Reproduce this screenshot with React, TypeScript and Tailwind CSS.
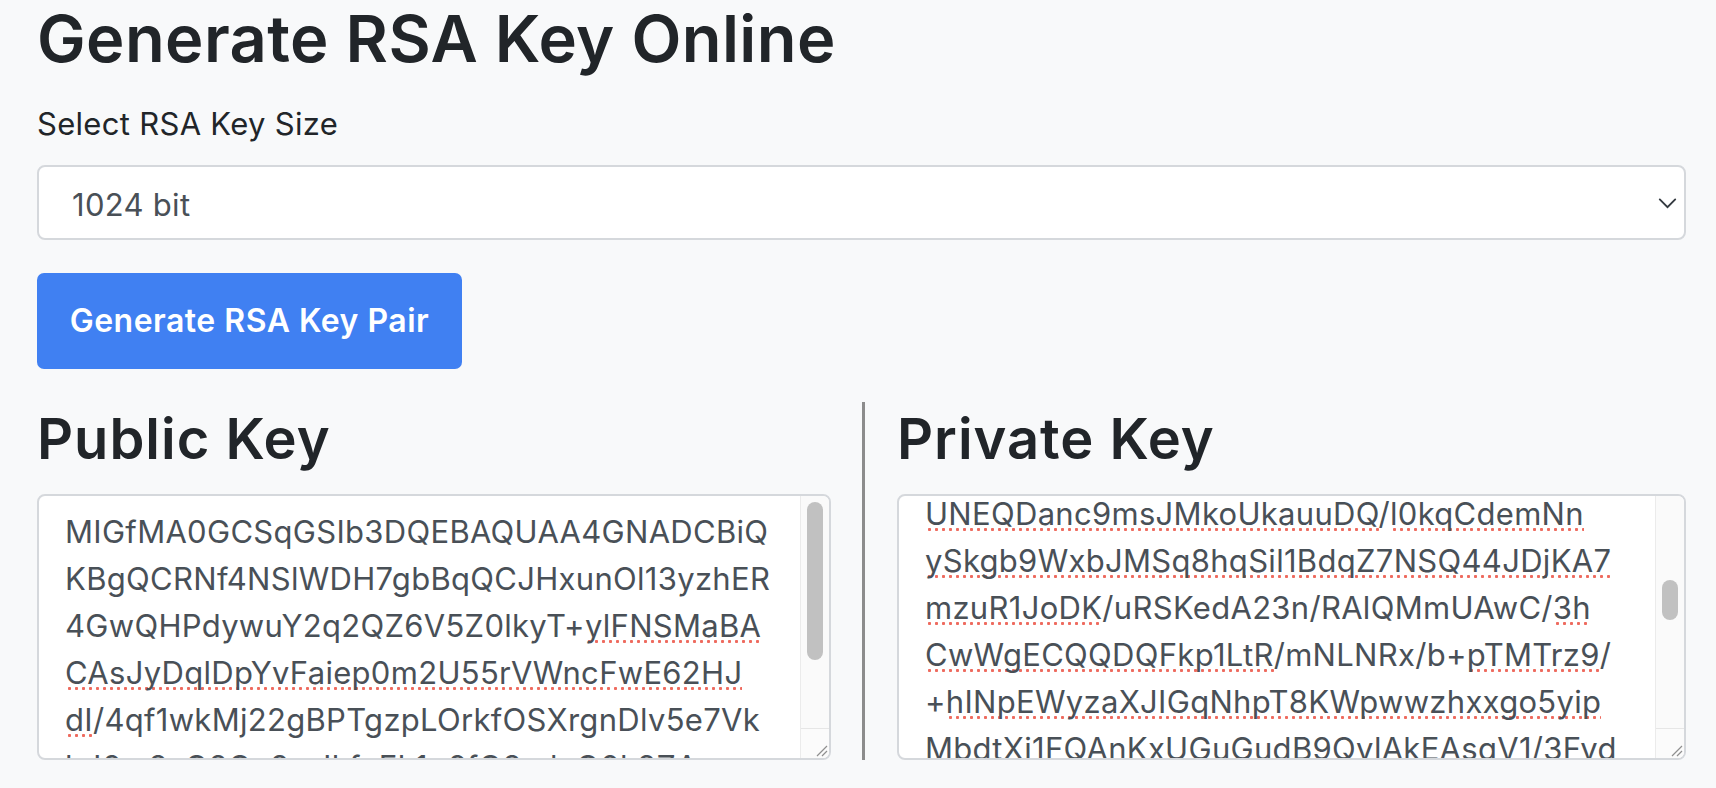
import { useEffect, useRef } from "react";

// "~" toggles the spell-check underline inside a line
const publicLines = [
  "MIGfMA0GCSqGSIb3DQEBAQUAA4GNADCBiQ",
  "KBgQCRNf4NSlWDH7gbBqQCJHxunOl13yzhER",
  "4GwQHPdywuY2q2QZ6V5Z0lkyT+~ylFNSMaBA~",
  "~CAsJyDqlDpYvFaiep0m2U55rVWncFwE62HJ~",
  "~dI~/4qf1wkMj22gBPTgzpLOrkfOSXrgnDlv5e7Vk",
  "hJ6m8sQ2Qe9wJkfvEk1p6fQ8xdeQ0k2ZAw",
  "IDAQAB",
];

const privateLines = [
  "MIICXAIBAAKBgQCRNf4NSlWDH7gbBqQCJHx",
  "unOl13yzhER4GwQHPdywuY2q2QZ6V5Z0lky",
  "T+ylFNSMaBACAsJyDqlDpYvFaiep0m2U55r",
  "VWncFwE62HJdI/4qf1wkMj22gBPTgzpLOrk",
  "fOSXrgnDlv5e7VkhJ6m8sQ2Qe9wJkfvEk1p",
  "6fQ8xdeQ0k2ZAwIDAQABAoGAQ7oVhNb3Tz",
  "jW5ZrH2x8dLkqP0sYt1vGmUcE4aR9fBnXo",
  "K3iLwS7pQzJd6hVeT2yMuA5gNcF8rOb1Xq",
  "Yk0sHtW4mEzPj9lRaG3vDiC6fUoN2wLbZx",
  "Qp7TeJ1yKcV5hSdMgR8nAo0XuBt4iFlW3",
  "sZ9qEvHk2LmPyD6rGcNaT1jOwU5xfIe8Bb",
  "~UNEQDanc9msJMkoUkauuDQ~/~l0kqCdemNn~",
  "~ySkgb9WxbJMSq8hqSil1BdqZ7NSQ44JDjKA7~",
  "~mzuR1JoDK~/uRSKedA23n/RAlQMmUAwC/~3h~",
  "~CwWgECQQDQFkp1LtR~/mNLNRx/b+~pTMTrz9~/",
  "+~hINpEWyzaXJIGqNhpT8KWpwwzhxxgo5yip~",
  "~MbdtXj1FQAnKxUGuGudB9QvlAkEAsqV1~/3Fvd",
  "aPzK4mHq8VtRy2NeLsW0dJcXg7UfB3oQi9",
  "EwT5lYr1CnGhA6vMkSuZ0bDxIp8jFqO2Ne",
  "Rg4HsLy7WdKc1QmVt9XzPa0uBoJf3EiNl6",
  "TbD2wYqG5kXnMs8rHzC1vLe4OaUj7pFgI0",
  "xKm9NcQ3sWd6yTb1ZhRv8LgE2oAfPu5JiS",
  "Vq0Hn4GtYe7kLw2MzB9cXsDr1UaOpF6jIl",
  "3dN8yQbKh5TmRx0WvEg2CsZo7LfAiJ4uPn",
  "Gk1rXe6BwSy9MtHq3VdLz0NcUa8OjF5pIb",
  "Yo2Tm7QsWx4KhEv1RzDn9LbGc6AfPu0Jig",
  "Ns5HdXe8kBqV3tMyC2wLz7OaUr1FjP9iSo",
  "Wm4QbTh0GxRv6yEk2DnZs8LcJa1fPu5Io3",
  "Bq7XeNd9KwHt2MyV4sLzR0gCa6OjF1pUiT",
  "hY3kQm8GnWxE5vb0RdTz2LsJc7AfPu9==",
];

function Line({ text }: { text: string }) {
  const parts = text.split("~");
  return (
    <div className="whitespace-pre">
      {parts.map((p, i) =>
        i % 2 === 1 ? (
          <span
            key={i}
            className="bg-[radial-gradient(circle,#ee6b5f_1.3px,transparent_1.9px)] bg-[length:7px_5px] bg-[position:1px_100%] bg-repeat-x"
          >
            {p}
          </span>
        ) : (
          <span key={i}>{p}</span>
        )
      )}
    </div>
  );
}

function KeyBox({
  lines,
  scrollTop,
  thumb,
}: {
  lines: string[];
  scrollTop: number;
  thumb: string;
}) {
  const ref = useRef<HTMLDivElement>(null);
  useEffect(() => {
    if (ref.current) ref.current.scrollTop = scrollTop;
  }, [scrollTop]);

  return (
    <div className="flex h-[266px] overflow-hidden rounded-[8px] border-2 border-[#d5d8dc] bg-white">
      <div
        ref={ref}
        className="flex-1 overflow-hidden pb-[12px] pl-[26px] pt-[12px] text-[31px] leading-[47px] tracking-[0.3px] text-[#495057]"
      >
        {lines.map((l, i) => (
          <Line key={i} text={l} />
        ))}
      </div>
      <div className="flex w-[29px] flex-col border-l border-[#ebebeb] bg-[#fafafa]">
        <div className="flex-1">
          <div className={thumb} />
        </div>
        <div className="flex h-[30px] items-end justify-end border-t border-[#e6e6e6] bg-[#fbfbfb]">
          <svg width="14" height="14" viewBox="0 0 14 14" className="mb-[1px] mr-[1px]">
            <path d="M13 3 3 13M13 8 8 13" stroke="#8f8f8f" strokeWidth="1.2" fill="none" />
          </svg>
        </div>
      </div>
    </div>
  );
}

export default function App() {
  return (
    <div className="min-h-screen bg-[#f8f9fa] pl-[37px] pr-[30px] text-[#212529] [font-family:Inter,sans-serif]">
      <h1 className="text-[65px] font-semibold leading-[78px] tracking-[0.4px]">
        Generate RSA Key Online
      </h1>

      <label className="mt-[26px] block text-[31px] leading-[40px] tracking-[0.3px]">
        Select RSA Key Size
      </label>
      <div className="mt-[21px] flex h-[75px] items-center justify-between rounded-[8px] border-2 border-[#d5d8dc] bg-white pl-[33px] pr-[7px] pt-[4px]">
        <span className="text-[31px] leading-[40px] tracking-[0.3px] text-[#495057]">1024 bit</span>
        <svg width="19" height="12" viewBox="0 0 16 10" className="mb-[4px]">
          <path d="m1.5 2 6.5 6.5 6.5-6.5" stroke="#343a40" strokeWidth="1.6" fill="none" strokeLinecap="round" />
        </svg>
      </div>

      <button className="mt-[33px] flex h-[96px] w-[425px] items-center justify-center rounded-[7px] bg-[#4080f2] text-[32px] font-semibold leading-[40px] tracking-[0.5px] text-white">
        Generate RSA Key Pair
      </button>

      <div className="mt-[33px] flex pb-[40px]">
        <div className="w-[825px] pr-[31px]">
          <h2 className="mb-[21px] mt-[4px] text-[56px] font-semibold leading-[67px] tracking-[1px]">
            Public Key
          </h2>
          <KeyBox
            lines={publicLines}
            scrollTop={0}
            thumb="mx-auto mt-[6px] h-[158px] w-[16px] rounded-full bg-[#c1c1c1]"
          />
        </div>
        <div className="flex-1 border-l-[3px] border-[#8c8c8c] pl-[32px]">
          <h2 className="mb-[21px] mt-[4px] text-[56px] font-semibold leading-[67px] tracking-[1px]">
            Private Key
          </h2>
          <KeyBox
            lines={privateLines}
            scrollTop={535}
            thumb="mx-auto mt-[84px] h-[40px] w-[16px] rounded-full bg-[#c1c1c1]"
          />
        </div>
      </div>
    </div>
  );
}
